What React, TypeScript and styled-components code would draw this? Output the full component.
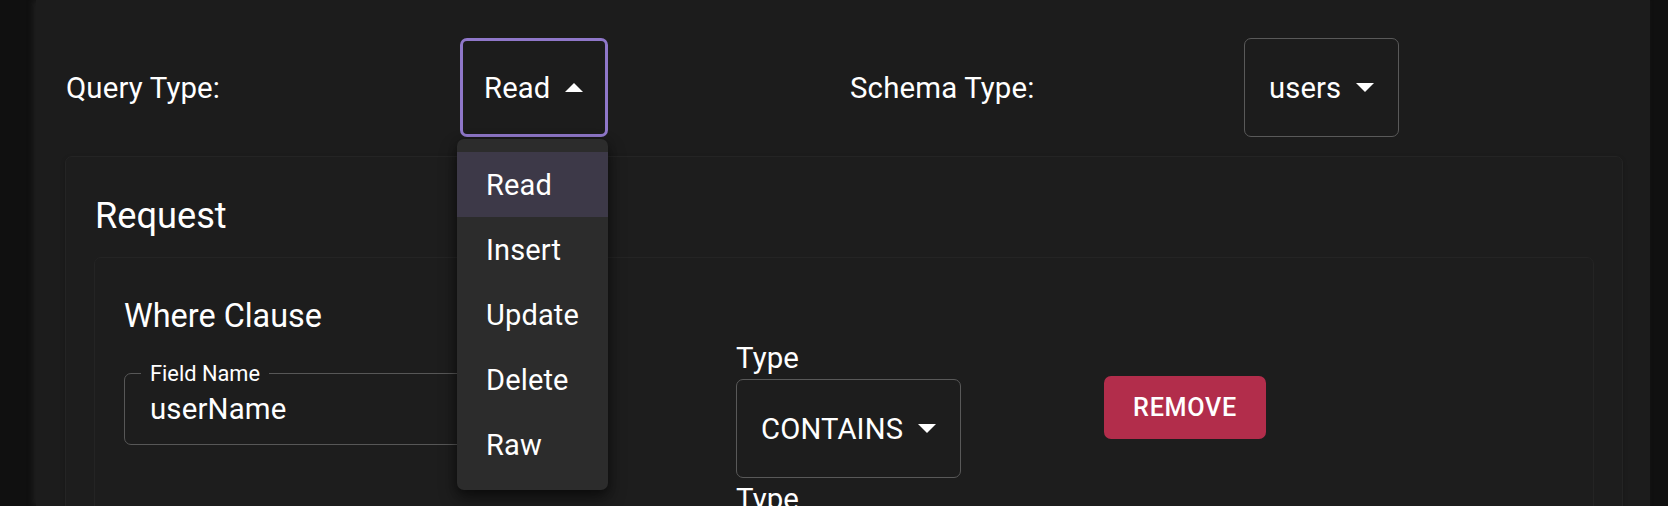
import styled, { createGlobalStyle } from 'styled-components'

const GlobalStyle = createGlobalStyle`
  html, body {
    margin: 0;
    padding: 0;
    background: #101010;
  }
  body {
    font-family: Roboto, 'Liberation Sans', sans-serif;
    color: #fff;
    overflow: hidden;
  }
`

const queryTypes = ['Read', 'Insert', 'Update', 'Delete', 'Raw']

const whereClauses = [
  { field: 'userName', type: 'CONTAINS' },
  { field: 'userName', type: 'CONTAINS' },
]

function Arrow({ up }: { up?: boolean }) {
  return (
    <ArrowIcon viewBox="0 0 10 5" aria-hidden>
      <path d={up ? 'M0 5L5 0L10 5Z' : 'M0 0L5 5L10 0Z'} fill="#fff" />
    </ArrowIcon>
  )
}

function Select({ value, open }: { value: string; open?: boolean }) {
  return (
    <SelectWrap>
      <SelectBox $focused={open}>
        <span>{value}</span>
        <Arrow up={open} />
      </SelectBox>
      {open && (
        <Menu>
          {queryTypes.map(q => (
            <MenuItem key={q} $selected={q === value}>
              {q}
            </MenuItem>
          ))}
        </Menu>
      )}
    </SelectWrap>
  )
}

function App() {
  return (
    <>
      <GlobalStyle />
      <Page>
        <Main>
          <TopRow>
            <FieldLabel>Query Type:</FieldLabel>
            <Select value="Read" open />
            <FieldLabel>Schema Type:</FieldLabel>
            <Select value="users" />
          </TopRow>

          <Panel>
            <PanelTitle>Request</PanelTitle>
            <InnerPanel>
              <SectionTitle>Where Clause</SectionTitle>
              {whereClauses.map((c, i) => (
                <ClauseRow key={i}>
                  <TextField>
                    <Legend>Field Name</Legend>
                    <InputValue>{c.field}</InputValue>
                  </TextField>
                  <TypeColumn>
                    <FieldLabel>Type</FieldLabel>
                    <Select value={c.type} />
                  </TypeColumn>
                  <RemoveButton>Remove</RemoveButton>
                </ClauseRow>
              ))}
            </InnerPanel>
          </Panel>
        </Main>
      </Page>
    </>
  )
}

export default App

// Styled Components
const Page = styled.div`
  display: flex;
  height: 100vh;
  box-sizing: border-box;
  padding: 0 18px 0 36px;
  overflow: hidden;
`

const Main = styled.main`
  flex: 1;
  background: #1c1c1c;
  padding: 38px 27px 0 29px;
  box-shadow: -3px 0 6px rgba(48, 48, 48, 0.45);
`

const TopRow = styled.div`
  display: grid;
  grid-template-columns: 394px 390px 394px auto;
  align-items: center;
  padding-left: 1px;
`

const FieldLabel = styled.div`
  font-size: 29.4px;
  line-height: 42px;
  letter-spacing: 0.15px;
  color: #fff;
`

const SelectWrap = styled.div`
  position: relative;
  justify-self: start;
`

const SelectBox = styled.div<{ $focused?: boolean }>`
  display: inline-flex;
  align-items: center;
  gap: 15px;
  box-sizing: border-box;
  height: 99px;
  padding: 0 ${p => (p.$focused ? '22px 0 21px' : '24px 0 24px')};
  border: ${p => (p.$focused ? '3px solid #8f77c9' : '1px solid #595959')};
  border-radius: 7px;
  font-size: 29.2px;
  line-height: 40px;
  letter-spacing: 0.15px;
  color: #fff;
`

const ArrowIcon = styled.svg`
  width: 18px;
  height: 9px;
  display: block;
`

const Menu = styled.div`
  position: absolute;
  top: calc(100% + 2px);
  left: -3px;
  width: 151px;
  box-sizing: border-box;
  padding: 13px 0;
  background: #2c2c2c;
  border-radius: 7px;
  box-shadow: 0 9px 18px rgba(0, 0, 0, 0.45), 0 3px 8px rgba(0, 0, 0, 0.3);
  z-index: 10;
`

const MenuItem = styled.div<{ $selected?: boolean }>`
  display: flex;
  align-items: center;
  height: 65px;
  padding-left: 29px;
  font-size: 29px;
  letter-spacing: 0.15px;
  background: ${p => (p.$selected ? '#3d3948' : 'transparent')};
`

const Panel = styled.section`
  margin-top: 19px;
  background: #1d1d1d;
  border: 1px solid #242424;
  border-radius: 7px;
  padding: 31px 28px 0;
  box-shadow: 0 2px 4px rgba(0, 0, 0, 0.25);
`

const PanelTitle = styled.h2`
  margin: 0;
  padding-left: 1px;
  font-size: 36.2px;
  line-height: 56px;
  font-weight: 400;
`

const InnerPanel = styled.div`
  margin-top: 13px;
  background: #1d1d1d;
  border: 1px solid #242424;
  border-radius: 7px;
  padding: 37px 29px 0;
`

const SectionTitle = styled.h3`
  margin: 0;
  font-size: 32.4px;
  line-height: 42px;
  font-weight: 400;
`

const ClauseRow = styled.div`
  display: flex;
  align-items: center;
  gap: 143px;
`

const TextField = styled.fieldset`
  width: 469px;
  box-sizing: border-box;
  min-width: 0;
  margin: 0 0 7px;
  padding: 0 0 10px 16px;
  border: 1px solid #575757;
  border-radius: 7px;
`

const Legend = styled.legend`
  padding: 0 9px;
  font-size: 21.8px;
  line-height: 21px;
  color: #fff;
`

const InputValue = styled.div`
  padding-left: 9px;
  font-size: 29.4px;
  line-height: 50px;
  letter-spacing: 0.15px;
`

const TypeColumn = styled.div`
  display: flex;
  flex-direction: column;
  align-items: flex-start;
`

const RemoveButton = styled.button`
  height: 63px;
  padding: 0 29px;
  border: none;
  border-radius: 7px;
  background: #b22d4b;
  color: #fff;
  font-family: inherit;
  font-size: 25.2px;
  font-weight: 500;
  letter-spacing: 0.7px;
  text-transform: uppercase;
`
